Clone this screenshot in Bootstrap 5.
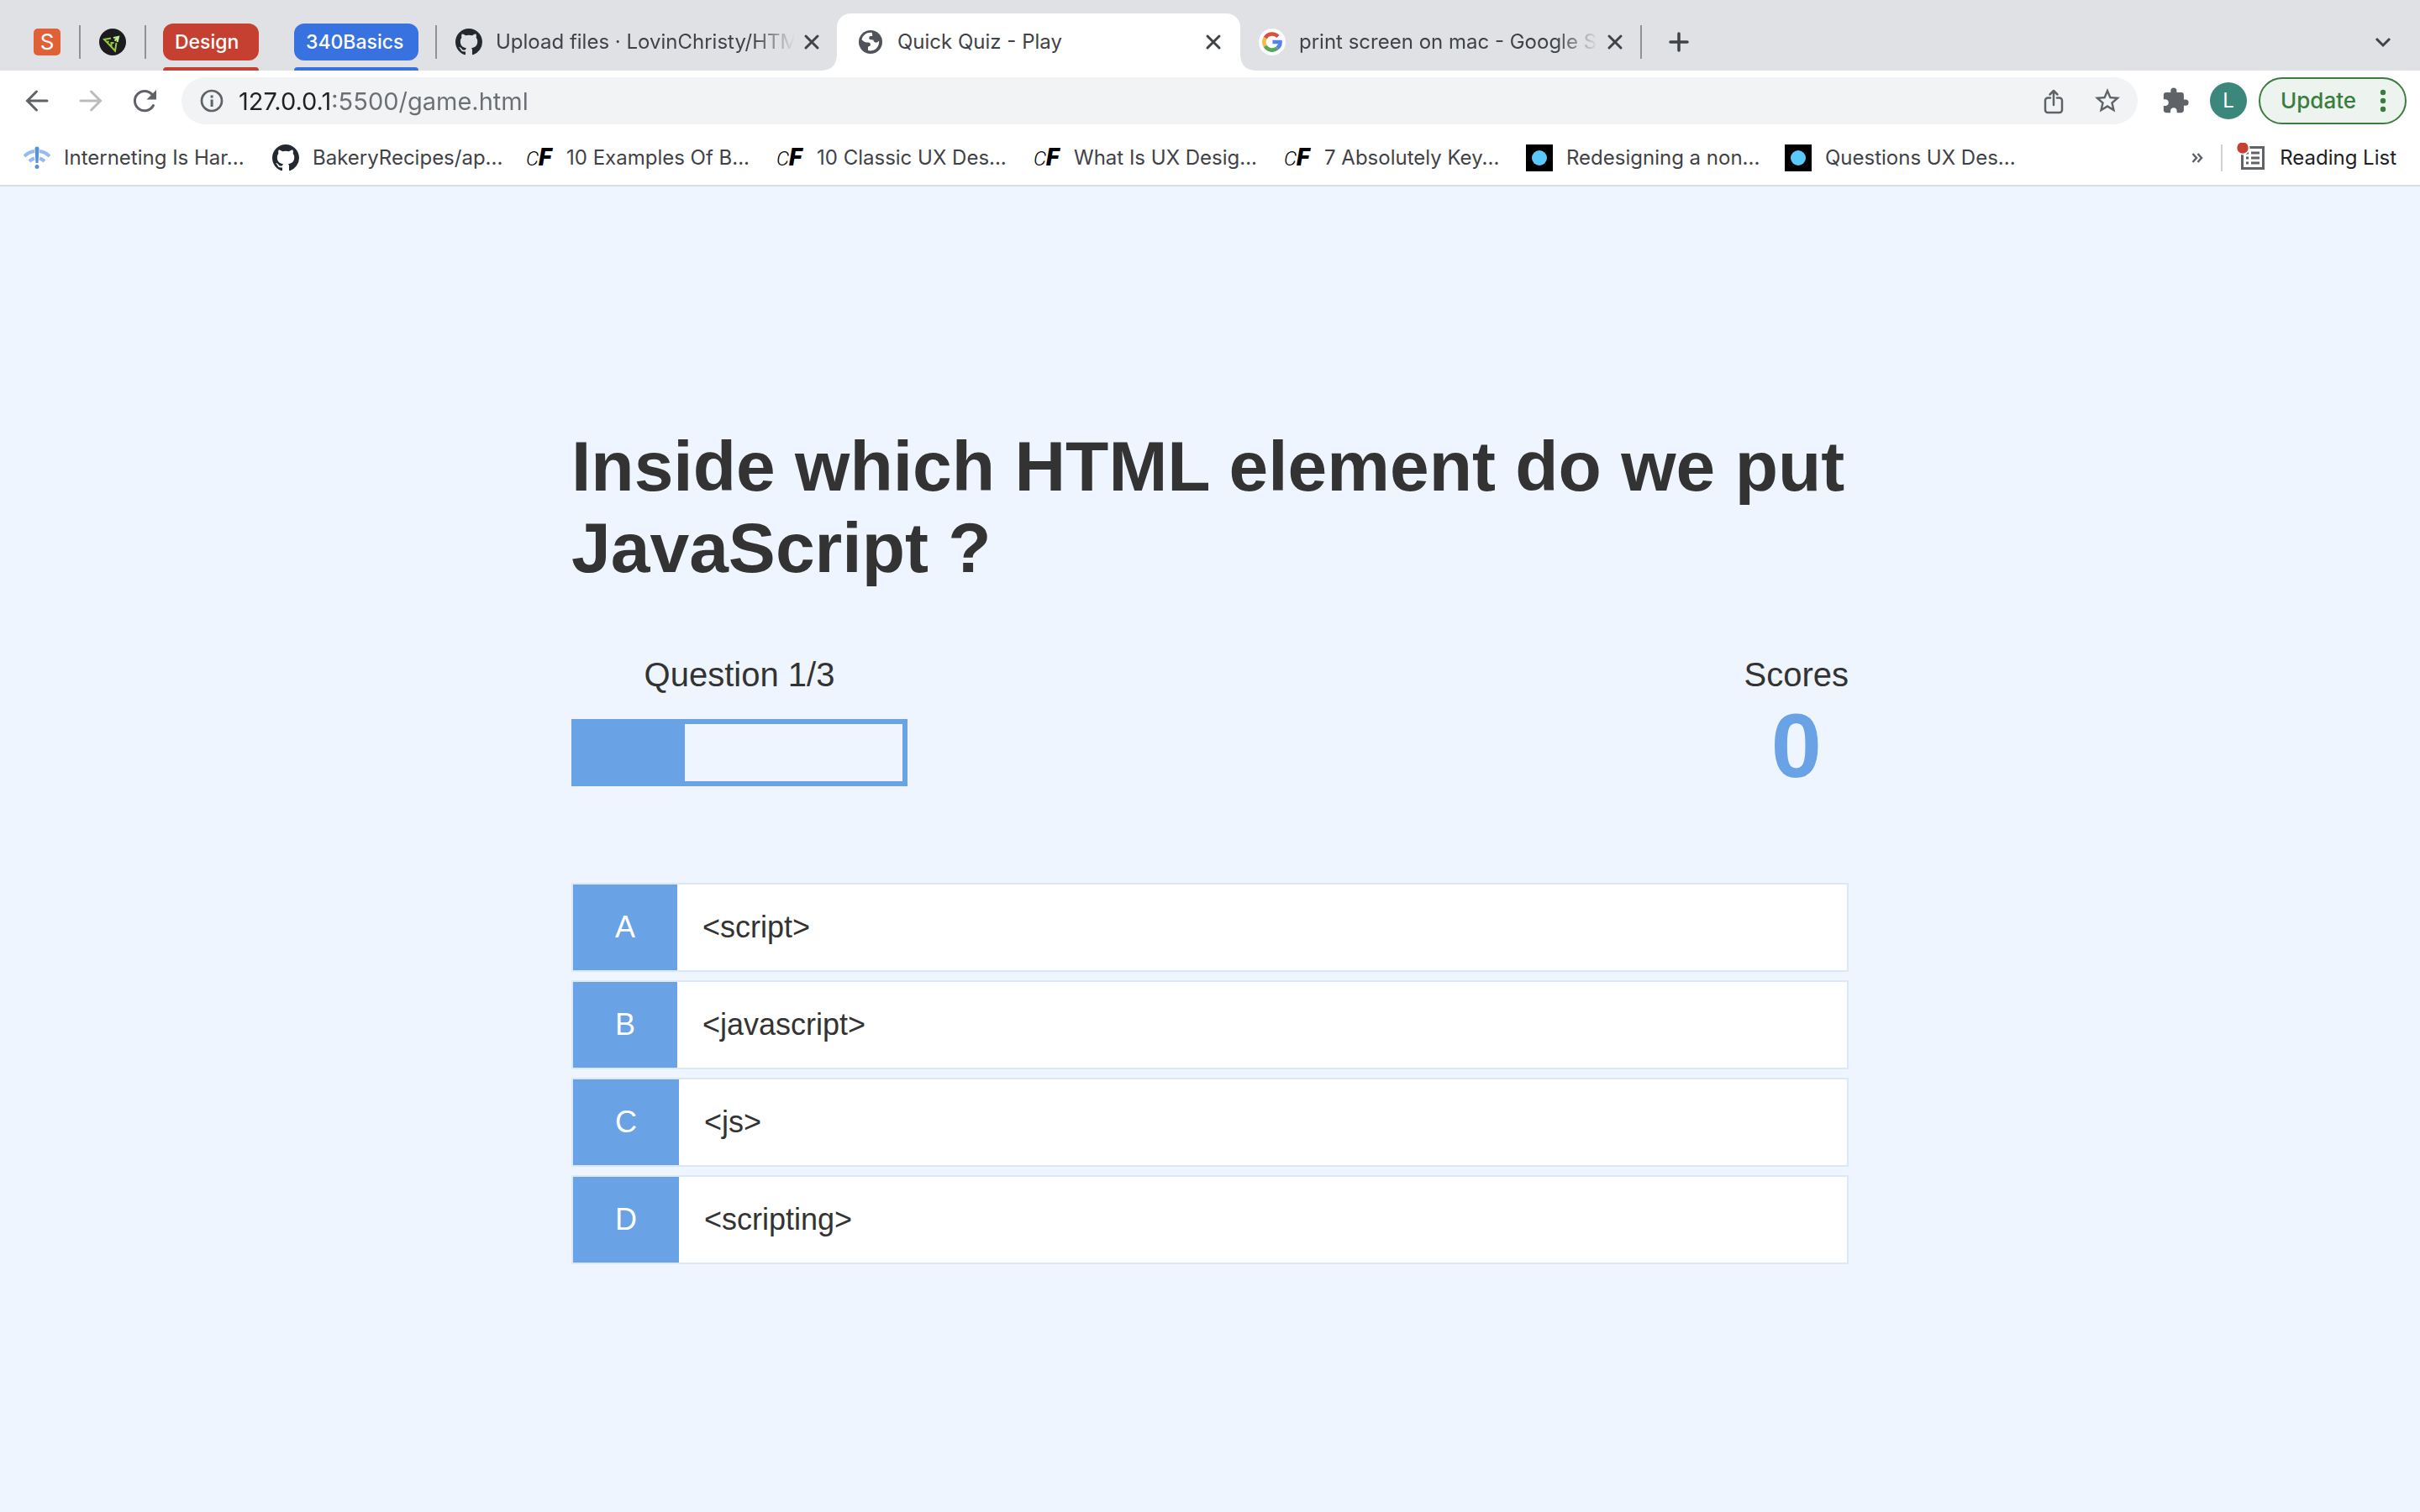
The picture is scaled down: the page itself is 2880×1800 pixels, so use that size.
<!DOCTYPE html>
<html lang="en">
<head>
<meta charset="utf-8">
<meta name="viewport" content="width=device-width, initial-scale=1">
<title>Quick Quiz - Play</title>
<link href="https://cdn.jsdelivr.net/npm/bootstrap@5.3.0/dist/css/bootstrap.min.css" rel="stylesheet">
<style>
  :root { --ui: Inter, Roboto, sans-serif; --quiz: "Liberation Sans", Arial, sans-serif; --blue: #69a2e5; }
  body { background: #eef5ff; color: #333; font-family: var(--quiz); }
  svg { display: block; flex: none; }
  button { border: 0; background: none; padding: 0; color: inherit; }
  .chrome { font-family: var(--ui); font-size: 24px; line-height: 32px; color: #3f4246; }

  /* tab strip */
  .strip { background: #dfe1e5; height: 84px; padding-left: 40px; }
  .strip-top { height: 68px; margin-top: 16px; }
  .pinned { gap: 22px; }
  .pin-s { width: 32px; height: 32px; background: #e06138; color: #fff; border-radius: 5px; font-size: 26px; }
  .rule { width: 2px; height: 40px; background: #919296; flex: none; }
  .groups { margin: 16px 20px 0; gap: 42px; }
  .tab-group { padding-top: 12px; }
  .tab-group button { display: block; height: 44px; border-radius: 12px; color: #fff; font-size: 23px; font-weight: 500; text-align: left; padding: 0 14px; }
  .tab-group i { display: block; height: 4px; margin-top: 8px; border-radius: 4px 4px 0 0; }
  .g-red, .g-red button { width: 114px; }
  .g-blue, .g-blue button { width: 148px; }
  .g-red button, .g-red i { background: #c64031; }
  .g-blue button, .g-blue i { background: #3871e0; }
  .site-tab { width: 476px; gap: 16px; padding: 0 18px 0 22px; }
  .site-tab a, .marks a { color: inherit; text-decoration: none; white-space: nowrap; }
  .site-tab a { flex: 1 1 0; overflow: hidden; margin-right: -8px; }
  .site-tab.short a { margin-right: 0; }
  .fade-end { -webkit-mask-image: linear-gradient(to right, #000 86%, transparent); mask-image: linear-gradient(to right, #000 86%, transparent); }
  .is-open { width: 480px; padding: 0 20px 0 24px; background: #fff; border-radius: 16px 16px 0 0; position: relative; }
  .is-open::before, .is-open::after { content: ""; position: absolute; bottom: 0; width: 16px; height: 16px; }
  .is-open::before { right: 100%; background: radial-gradient(circle at 0 0, transparent 15px, #fff 16px); }
  .is-open::after { left: 100%; background: radial-gradient(circle at 100% 0, transparent 15px, #fff 16px); }
  .new-tab { margin-left: 32px; }
  .tab-search { margin-right: 32px; }

  /* toolbar */
  .toolbar { background: #fff; height: 72px; padding: 0 16px 0 28px; }
  .nav-keys { gap: 32px; }
  .omni { height: 56px; border-radius: 28px; background: #f1f3f4; padding: 0 18px 0 20px; margin-left: 28px; }
  .omni input { border: 0; outline: 0; padding: 0; margin-left: 16px; font-size: 29px; height: 40px; min-width: 0;
    background: linear-gradient(to right, #202124 113px, #6b6e72 113px); -webkit-background-clip: text; background-clip: text; -webkit-text-fill-color: transparent; }
  .share { margin-right: 30px; }
  .extensions { margin: 0 24px 0 28px; }
  .avatar { width: 44px; height: 44px; background: #3c877b; color: #fff; border-radius: 50%; }
  .update { height: 56px; width: 176px; margin-left: 14px; border: 2px solid #3a7d3e; border-radius: 28px; background: #edf3ef; color: #3a7d3e; font-size: 26px; font-weight: 500; padding: 0 12px 0 24px; }

  /* bookmarks */
  .bookmarks { background: #fff; height: 66px; border-bottom: 2px solid #dadce0; padding: 0 28px; }
  .marks { display: grid; grid-template-columns: 296px 302px 298px 306px 298px 288px 308px 300px; }
  .marks a { display: flex; align-items: center; gap: 16px; }
  .cf { width: 32px; flex: none; color: #000; display: flex; align-items: baseline; }
  .cf span { font: italic 300 24px/32px Roboto, sans-serif; width: 15px; }
  .cf b { font: italic 900 29px/32px Roboto, sans-serif; }
  .mark-rule { width: 2px; height: 32px; background: #cfd1d4; margin: 0 16px 0 20px; }
  .reading { color: #202124; }

  /* quiz */
  .quiz { width: 100%; max-width: 1520px; margin: 0 auto; }
  .quiz h1 { font-size: 84px; font-weight: 700; line-height: 97px; margin: 0 0 79px; }
  .hud { font-size: 40px; line-height: 46px; margin-bottom: 101px; text-align: center; }
  .hud-bar { width: 400px; height: 80px; border: 6px solid var(--blue); border-radius: 0; background: none; margin-top: 30px; }
  .hud-bar .progress-bar { background: var(--blue); }
  .hud-score { font-size: 108px; font-weight: 700; line-height: 124px; color: var(--blue); }
  .answer { display: flex; width: 100%; height: 106px; margin-bottom: 10px; background: #fff; border: 2px solid #dbe8fa; font-size: 36px; line-height: 102px; text-align: left; color: #333; }
  .answer b { font-weight: 400; background: var(--blue); color: #fff; padding: 0 50px; }
  .answer span { padding: 0 30px; }
</style>
</head>
<body class="d-flex flex-column min-vh-100">

<svg width="0" height="0" class="position-absolute" aria-hidden="true">
  <symbol id="octo" viewBox="0 0 16 16"><path fill="#24292f" d="M8 0C3.58 0 0 3.58 0 8c0 3.54 2.29 6.53 5.47 7.59.4.07.55-.17.55-.38 0-.19-.01-.82-.01-1.49-2.01.37-2.53-.49-2.69-.94-.09-.23-.48-.94-.82-1.13-.28-.15-.68-.52-.01-.53.63-.01 1.08.58 1.23.82.72 1.21 1.87.87 2.33.66.07-.52.28-.87.51-1.07-1.78-.2-3.64-.89-3.64-3.95 0-.87.31-1.59.82-2.15-.08-.2-.36-1.02.08-2.12 0 0 .67-.21 2.2.82.64-.18 1.32-.27 2-.27s1.36.09 2 .27c1.53-1.04 2.2-.82 2.2-.82.44 1.1.16 1.92.08 2.12.51.56.82 1.27.82 2.15 0 3.07-1.87 3.75-3.65 3.95.29.25.54.73.54 1.48 0 1.07-.01 1.93-.01 2.2 0 .21.15.46.55.38A8.01 8.01 0 0 0 16 8c0-4.42-3.58-8-8-8z"/></symbol>
  <symbol id="close" viewBox="0 0 24 24"><path stroke="#3f4246" stroke-width="3" stroke-linecap="round" d="M5 5l14 14M19 5L5 19"/></symbol>
</svg>

<header class="chrome">
  <div class="strip d-flex align-items-start">
    <div class="strip-top pinned d-flex align-items-center">
      <a href="#" class="pin-s d-flex align-items-center justify-content-center text-decoration-none" aria-label="Pinned tab S">S</a>
      <span class="rule"></span>
      <a href="#" aria-label="Pinned tab">
        <svg width="32" height="32" viewBox="0 0 32 32"><circle cx="16" cy="16" r="16" fill="#1c1c20"/><path fill="none" stroke="#96c93d" stroke-width="2" d="M14 11.500L6 13l13 13.500 1.500-9.500M9.500 16.500l2-1.500M14.500 21.500v-4.500h3"/><path fill="none" stroke="#c0ee8c" stroke-width="2.200" d="M17 11l6-1.200-1.500 6.200M22 11l-3.500 3.500"/></svg>
      </a>
      <span class="rule"></span>
    </div>
    <div class="groups d-flex">
      <div class="tab-group g-red"><button type="button">Design</button><i></i></div>
      <div class="tab-group g-blue"><button type="button">340Basics</button><i></i></div>
    </div>
    <nav class="strip-top d-flex">
      <span class="rule align-self-center"></span>
      <div class="site-tab d-flex align-items-center">
        <svg width="32" height="32"><use href="#octo"/></svg>
        <a href="#" class="fade-end">Upload files · LovinChristy/HTM</a>
        <button type="button" aria-label="Close tab"><svg width="24" height="24"><use href="#close"/></svg></button>
      </div>
      <div class="site-tab short is-open d-flex align-items-center">
        <svg width="32" height="32" viewBox="0 0 32 32"><circle cx="16" cy="16" r="14" fill="#50525a"/><path fill="#fff" d="M18 5c-6-1-11 2.500-12.500 8 2 3 5 3.500 8 3.500 1.500 0 2.500 1 2.500 3s-3 1-3 3v3.500c5 1.500 10.500-1 12.500-6.500.7-2 .8-3.500.5-5-1 1.500-2.500 2.500-4.500 2-1-.3-2-1.500-2.200-3-1.300-.2-2.500 0-4-.5-1.500-.6-1.300-3 0-3.700 1.200-.6 2.700.3 3-1 .2-1.300-1-2.300-.3-3.300z"/></svg>
        <a href="#">Quick Quiz - Play</a>
        <button type="button" aria-label="Close tab"><svg width="24" height="24"><use href="#close"/></svg></button>
      </div>
      <div class="site-tab d-flex align-items-center">
        <svg width="32" height="32" viewBox="0 0 32 32"><circle cx="16" cy="16" r="16" fill="#fff"/><g fill="none" stroke-width="4.600"><path stroke="#d9503f" d="M22.900 9.500A9.600 9.600 0 0 0 7.700 11.200"/><path stroke="#f2bd42" d="M7.700 11.200a9.600 9.600 0 0 0 0 9.600"/><path stroke="#58a55c" d="M7.700 20.800a9.600 9.600 0 0 0 14.500 2.500"/><path stroke="#5383ec" d="M22.200 23.300c2.300-2 3.500-4.800 3.300-7.300H16.500"/></g></svg>
        <a href="#" class="fade-end">print screen on mac - Google S</a>
        <button type="button" aria-label="Close tab"><svg width="24" height="24"><use href="#close"/></svg></button>
      </div>
      <span class="rule align-self-center"></span>
      <button type="button" class="new-tab" aria-label="New tab"><svg width="24" height="24" viewBox="0 0 24 24"><path stroke="#3f4246" stroke-width="3.500" stroke-linecap="round" d="M12 2v20M2 12h20"/></svg></button>
    </nav>
    <button type="button" class="tab-search strip-top ms-auto" aria-label="Search tabs"><svg width="24" height="24" viewBox="0 0 24 24"><path fill="none" stroke="#3f4246" stroke-width="3" d="M4 8l8 8 8-8"/></svg></button>
  </div>

  <div class="toolbar d-flex align-items-center">
    <div class="nav-keys d-flex">
      <button type="button" aria-label="Back"><svg width="32" height="32" viewBox="0 0 32 32"><path fill="none" stroke="#5f6368" stroke-width="3" stroke-linecap="round" d="M28 16H5M15.500 5L4.500 16l11 11"/></svg></button>
      <button type="button" aria-label="Forward"><svg width="32" height="32" viewBox="0 0 32 32"><path fill="none" stroke="#babcbe" stroke-width="3" stroke-linecap="round" d="M4 16h23M16.500 5l11 11-11 11"/></svg></button>
      <button type="button" aria-label="Reload"><svg width="32" height="32" viewBox="0 0 32 32"><path fill="none" stroke="#5f6368" stroke-width="3" stroke-linecap="round" d="M26.500 21.500A11.700 11.700 0 1 1 25 8.500"/><path fill="#5f6368" d="M30 3v11.500H18.500z"/></svg></button>
    </div>
    <div class="omni d-flex align-items-center flex-grow-1">
      <svg width="32" height="32" viewBox="0 0 32 32"><circle cx="16" cy="16" r="12" fill="none" stroke="#5f6368" stroke-width="2.700"/><path fill="#5f6368" d="M14.600 14.500h3V23h-3zM14.600 9.500h3v3h-3z"/></svg>
      <input type="text" class="flex-grow-1" aria-label="Address" value="127.0.0.1:5500/game.html">
      <button type="button" class="share" aria-label="Share"><svg width="32" height="32" viewBox="0 0 32 32"><path fill="none" stroke="#5f6368" stroke-width="2.500" stroke-linecap="round" stroke-linejoin="round" d="M12 12.500H9a3 3 0 0 0-3 3V27a3 3 0 0 0 3 3h14a3 3 0 0 0 3-3V15.500a3 3 0 0 0-3-3h-3M16 21V4.500M11.500 8.500L16 4l4.500 4.500"/></svg></button>
      <button type="button" aria-label="Bookmark this page"><svg width="36" height="36" viewBox="0 0 24 24"><path fill="#5f6368" d="M22 9.240l-7.190-.62L12 2 9.190 8.630 2 9.240l5.460 4.730L5.820 21 12 17.270 18.180 21l-1.630-7.030L22 9.240zM12 15.400l-3.760 2.270 1-4.280-3.320-2.880 4.380-.38L12 6.100l1.710 4.040 4.380.38-3.320 2.880 1 4.280L12 15.400z"/></svg></button>
    </div>
    <button type="button" class="extensions" aria-label="Extensions"><svg width="34" height="34" viewBox="0 0 24 24"><path fill="#5f6368" d="M20.500 11H19V7c0-1.100-.9-2-2-2h-4V3.500a2.500 2.500 0 0 0-5 0V5H4c-1.100 0-1.990.9-1.990 2v3.800H3.500c1.490 0 2.700 1.210 2.700 2.700s-1.210 2.700-2.700 2.700H2V20c0 1.100.9 2 2 2h3.800v-1.500c0-1.490 1.210-2.700 2.700-2.700s2.700 1.210 2.700 2.700V22H17c1.100 0 2-.9 2-2v-4h1.500a2.500 2.500 0 0 0 0-5z"/></svg></button>
    <button type="button" class="avatar d-flex align-items-center justify-content-center">L</button>
    <button type="button" class="update d-flex align-items-center justify-content-between">Update
      <svg width="28" height="28" viewBox="0 0 28 28" fill="#3a7d3e"><circle cx="14" cy="4" r="3.200"/><circle cx="14" cy="14" r="3.200"/><circle cx="14" cy="24" r="3.200"/></svg>
    </button>
  </div>

  <div class="bookmarks d-flex align-items-center">
    <nav class="marks">
      <a href="#"><svg width="32" height="32" viewBox="0 0 32 32"><g fill="none" stroke="#94bbf2" stroke-width="4"><path d="M1 14q5-5 12-6M31 14q-5-5-12-6M7 20q2.500-2.500 6-3.500M25 20q-2.500-2.500-6-3.500"/></g><path fill="#5b8fdb" d="M13.500 5a2.500 2.500 0 0 1 5 0l-1 17h-3z"/><circle cx="16" cy="26.500" r="2.500" fill="#5b8fdb"/></svg>Interneting Is Har...</a>
      <a href="#"><svg width="32" height="32"><use href="#octo"/></svg>BakeryRecipes/ap...</a>
      <a href="#"><span class="cf"><span>C</span><b>F</b></span>10 Examples Of B...</a>
      <a href="#"><span class="cf"><span>C</span><b>F</b></span>10 Classic UX Des...</a>
      <a href="#"><span class="cf"><span>C</span><b>F</b></span>What Is UX Desig...</a>
      <a href="#"><span class="cf"><span>C</span><b>F</b></span>7 Absolutely Key...</a>
      <a href="#"><svg width="32" height="32"><path d="M0 0h32v32H0z"/><circle cx="16" cy="16" r="9" fill="#5ac8fa"/></svg>Redesigning a non...</a>
      <a href="#"><svg width="32" height="32"><path d="M0 0h32v32H0z"/><circle cx="16" cy="16" r="9" fill="#5ac8fa"/></svg>Questions UX Des...</a>
    </nav>
    <button type="button" class="ms-auto" aria-label="More bookmarks"><svg width="16" height="16" viewBox="0 0 16 16"><path fill="none" stroke="#5f6368" stroke-width="2.500" d="M2.500 3l4.500 5-4.500 5M8.500 3l4.500 5-4.500 5"/></svg></button>
    <span class="mark-rule"></span>
    <button type="button" class="reading d-flex align-items-center gap-3">
      <svg width="36" height="36" viewBox="0 0 36 36"><path fill="none" stroke="#5f6368" stroke-width="3" d="M7.500 5.500h25v25h-25z"/><path stroke="#5f6368" stroke-width="3" d="M18 12h10M18 18h10M18 24h10M12 12h3M12 18h3M12 24h3"/><circle cx="8" cy="6" r="8.500" fill="#fff"/><circle cx="8" cy="6" r="6.700" fill="#c64031"/></svg>Reading List
    </button>
  </div>
</header>

<main class="flex-grow-1 d-flex flex-column justify-content-center">
  <div class="quiz">
    <h1>Inside which HTML element do we put JavaScript ?</h1>
    <div class="hud d-flex justify-content-between">
      <div>
        <div>Question 1/3</div>
        <div class="hud-bar progress" role="progressbar" aria-label="Quiz progress" aria-valuenow="1" aria-valuemin="0" aria-valuemax="3">
          <div class="progress-bar" style="width:33.33%"></div>
        </div>
      </div>
      <div>
        <div>Scores</div>
        <div class="hud-score">0</div>
      </div>
    </div>
    <button type="button" class="answer"><b>A</b><span>&lt;script&gt;</span></button>
    <button type="button" class="answer"><b>B</b><span>&lt;javascript&gt;</span></button>
    <button type="button" class="answer"><b>C</b><span>&lt;js&gt;</span></button>
    <button type="button" class="answer"><b>D</b><span>&lt;scripting&gt;</span></button>
  </div>
</main>

<script src="https://cdn.jsdelivr.net/npm/bootstrap@5.3.0/dist/js/bootstrap.bundle.min.js"></script>
</body>
</html>
